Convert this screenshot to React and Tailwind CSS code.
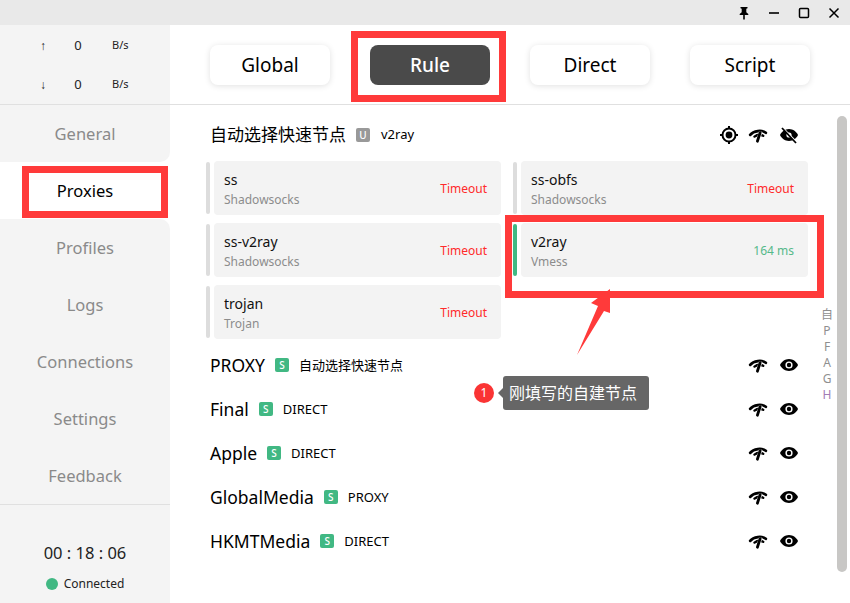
const font = { fontFamily: '"Noto Sans", "Noto Sans CJK SC", sans-serif' };

const nav = ['General', 'Proxies', 'Profiles', 'Logs', 'Connections', 'Settings', 'Feedback'];
const modes = ['Global', 'Rule', 'Direct', 'Script'];

const proxies = [
    { name: 'ss', type: 'Shadowsocks', delay: 'Timeout' },
    { name: 'ss-obfs', type: 'Shadowsocks', delay: 'Timeout' },
    { name: 'ss-v2ray', type: 'Shadowsocks', delay: 'Timeout' },
    { name: 'v2ray', type: 'Vmess', delay: '164 ms', active: true },
    { name: 'trojan', type: 'Trojan', delay: 'Timeout' },
];

const groups = [
    { name: 'PROXY', now: '自动选择快速节点' },
    { name: 'Final', now: 'DIRECT' },
    { name: 'Apple', now: 'DIRECT' },
    { name: 'GlobalMedia', now: 'PROXY' },
    { name: 'HKMTMedia', now: 'DIRECT' },
];

const LocateIcon = () => (
    <svg width="20" height="20" viewBox="0 0 20 20" fill="none" stroke="black">
        <circle cx="10" cy="10" r="6.5" strokeWidth="2" />
        <circle cx="10" cy="10" r="3.4" fill="black" stroke="none" />
        <path d="M10 1v2.500M10 16.500V19M1 10h2.500M16.500 10H19" strokeWidth="2" />
    </svg>
);

const SpeedIcon = () => (
    <svg width="20" height="20" viewBox="0 0 20 20" fill="none" stroke="black" strokeLinecap="round">
        <path d="M2.200 9.800C5.500 5.600 14 4.600 17.800 7.800" strokeWidth="2.800" />
        <path d="M6.500 11.600C9 9.600 12.500 9.200 15.200 10.800" strokeWidth="2.400" />
        <path d="M12.800 6.500 9.300 17" stroke="white" strokeWidth="3.600" strokeLinecap="butt" />
        <path d="M12.200 7.500 9.400 16.200" strokeWidth="2.800" />
    </svg>
);

const EyeIcon = () => (
    <svg width="20" height="20" viewBox="0 0 20 20">
        <path d="M10 4C5.800 4 2.500 6.800 1 10c1.500 3.200 4.800 6 9 6s7.500-2.800 9-6c-1.500-3.200-4.800-6-9-6z" fill="black" />
        <circle cx="10" cy="10" r="3.600" fill="white" />
        <circle cx="10" cy="10" r="2.200" fill="black" />
    </svg>
);

const EyeOffIcon = () => (
    <svg width="20" height="20" viewBox="0 0 20 20">
        <path d="M10 4C5.800 4 2.500 6.800 1 10c1.500 3.200 4.800 6 9 6s7.500-2.800 9-6c-1.500-3.200-4.800-6-9-6z" fill="black" />
        <circle cx="10" cy="10" r="2.600" fill="white" />
        <path d="M3.800 2.800 17.800 17.200" stroke="white" strokeWidth="1.400" />
        <path d="M3 3 17 18" stroke="black" strokeWidth="1.800" />
    </svg>
);

const Badge = ({ color, children }) => (
    <span className={`flex h-[14px] w-[14px] shrink-0 items-center justify-center rounded-[2px] text-[10px] font-medium leading-none text-white ${color}`}>
        {children}
    </span>
);

const ProxyCard = ({ proxy }) => (
    <div className="flex h-[54px] gap-1">
        <div className={`my-px w-1 rounded-sm ${proxy.active ? 'bg-[#41b883]' : 'bg-[#dddddd]'}`} />
        <div className="flex flex-1 items-center justify-between rounded bg-[#f3f3f3] pl-[10px] pr-[14px]">
            <div className="pt-[3px]">
                <div className="text-[14px] leading-[20px] text-[#111]">{proxy.name}</div>
                <div className="text-[12px] leading-[20px] text-[#8c8c8c]">{proxy.type}</div>
            </div>
            <div className={`pt-[2px] text-[12px] ${proxy.active ? 'text-[#55b98a]' : 'text-[#ff2a2a]'}`}>{proxy.delay}</div>
        </div>
    </div>
);

const App = () => {
    return (
        <div style={font} className="relative flex h-[603px] w-[850px] flex-col overflow-hidden bg-white text-black">
            {/* title bar */}
            <div className="flex h-[25px] shrink-0 items-center justify-end bg-[#e9e9e9] pr-px">
                <svg width="30" height="25" viewBox="0 0 30 25" fill="black">
                    <path d="M11.500 7h7v1.200l-1.200.600v3.400l2 1.800V15h-3.500v4.500h-1.600V15h-3.500v-1l2-1.800V8.800l-1.200-.600z" />
                </svg>
                <svg width="30" height="25" viewBox="0 0 30 25"><path d="M10 13h10" stroke="black" strokeWidth="1.600" /></svg>
                <svg width="30" height="25" viewBox="0 0 30 25"><rect x="10.500" y="8.500" width="9" height="9" rx="1" fill="none" stroke="black" strokeWidth="1.500" /></svg>
                <svg width="30" height="25" viewBox="0 0 30 25"><path d="M10.500 8.500l9 9M19.500 8.500l-9 9" stroke="black" strokeWidth="1.500" /></svg>
            </div>

            <div className="flex flex-1">
                {/* sidebar */}
                <div className="flex w-[170px] shrink-0 flex-col bg-white">
                    <div className="flex h-[80px] flex-col border-b border-[#e0e0e0] bg-[#f4f4f4] pt-px">
                        {['↑', '↓'].map((arrow) => (
                            <div key={arrow} className="grid h-[39px] shrink-0 grid-cols-[20px_50px_1fr] items-center pl-[33px] text-[#222]">
                                <span style={{ fontFamily: '"Liberation Sans", sans-serif' }} className="text-center text-[12px]">{arrow}</span>
                                <span className="text-center text-[13px]">0</span>
                                <span className="pl-[9px] text-[11px]">B/s</span>
                            </div>
                        ))}
                    </div>
                    {nav.map((item, i) => (
                        <div
                            key={item}
                            className={`flex h-[57px] items-center justify-center pt-[2px] text-[16.5px] ${
                                item === 'Proxies'
                                    ? 'bg-white text-black'
                                    : `bg-[#f4f4f4] text-[#8a8a8a] ${i === 0 ? 'rounded-br-[10px]' : ''} ${i === 2 ? 'rounded-tr-[10px]' : ''}`
                            }`}
                        >
                            {item}
                        </div>
                    ))}
                    <div className="flex flex-1 flex-col items-center border-t border-[#e0e0e0] bg-[#f4f4f4] pt-[36px]">
                        <div className="text-[16.5px] leading-[24px] text-[#222]">00 : 18 : 06</div>
                        <div className="mt-[12px] flex items-center gap-[6px] text-[12px] leading-[14px] text-[#222]">
                            <span className="h-3 w-3 rounded-full bg-[#41b883]" />
                            Connected
                        </div>
                    </div>
                </div>

                {/* main */}
                <div className="flex flex-1 flex-col">
                    <div className="flex h-[80px] shrink-0 gap-10 border-b border-[#e0e0e0] pl-10 pt-5">
                        {modes.map((mode) => (
                            <div
                                key={mode}
                                className={`flex h-10 w-[120px] items-center justify-center rounded-lg text-[19px] ${
                                    mode === 'Rule'
                                        ? 'bg-[#4a4a4a] font-medium text-white'
                                        : 'bg-white text-black shadow-[0_1px_6px_rgba(0,0,0,0.12)]'
                                }`}
                            >
                                {mode}
                            </div>
                        ))}
                    </div>

                    <div className="flex h-[56px] items-center pl-10 pr-[51px] pt-[4px]">
                        <span className="text-[17px]">自动选择快速节点</span>
                        <span className="ml-[10px]"><Badge color="bg-[#999999]">U</Badge></span>
                        <span className="ml-[11px] text-[13px]">v2ray</span>
                        <div className="ml-auto flex gap-[11px]">
                            <div className="-mr-[2px]"><LocateIcon /></div>
                            <SpeedIcon />
                            <EyeOffIcon />
                        </div>
                    </div>

                    <div className="grid grid-cols-[295px_295px] gap-x-3 gap-y-2 pl-9">
                        {proxies.map((proxy) => (
                            <ProxyCard key={proxy.name} proxy={proxy} />
                        ))}
                    </div>

                    <div className="mt-1">
                        {groups.map((group) => (
                            <div key={group.name} className="flex h-11 items-center pl-10 pr-[51px]">
                                <span className="text-[17.5px]">{group.name}</span>
                                <span className="ml-[10px]"><Badge color="bg-[#41b883]">S</Badge></span>
                                <span className="ml-[10px] pt-[2px] text-[13px]">{group.now}</span>
                                <div className="ml-auto flex gap-[11px]">
                                    <SpeedIcon />
                                    <EyeIcon />
                                </div>
                            </div>
                        ))}
                    </div>
                </div>
            </div>

            {/* scrollbar */}
            <div className="absolute left-[837px] top-[116px] h-[456px] w-[10px] rounded-full bg-[#c8c7c5]" />

            {/* letter index */}
            <div className="absolute left-[820px] top-[307px] flex w-[14px] flex-col items-center text-[12px] leading-[16px] text-[#8f8f8f]">
                <span>自</span>
                <span>P</span>
                <span>F</span>
                <span>A</span>
                <span>G</span>
                <span className="text-[#a27db5]">H</span>
            </div>

            {/* red annotation boxes */}
            <div className="absolute left-[351px] top-[31px] h-[71px] w-[155px] border-[7px] border-[#ff3a3a]" />
            <div className="absolute left-[22px] top-[166px] h-[52px] w-[146px] border-[7px] border-[#ff3a3a]" />
            <div className="absolute left-[505px] top-[215px] h-[83px] w-[319px] border-[7px] border-[#ff3a3a]" />

            <svg className="absolute left-[570px] top-[285px]" width="50" height="75" viewBox="570 285 50 75">
                <polygon points="610,289 591,303 598,306 577,355 604,311 610,313" fill="#ff3a3a" />
            </svg>

            {/* callout */}
            <div className="absolute left-[474px] top-[376px] flex items-center">
                <span className="flex h-5 w-5 items-center justify-center rounded-full bg-[#fa3434] text-[12px] text-white">1</span>
                <span className="ml-[4px] h-0 w-0 border-y-[5px] border-r-[5px] border-y-transparent border-r-[#666666]" />
                <span className="flex h-[34px] w-[146px] items-center rounded-[3px] bg-[#666666] pl-[6px] text-[16px] text-white">刚填写的自建节点</span>
            </div>
        </div>
    );
};

export default App;
